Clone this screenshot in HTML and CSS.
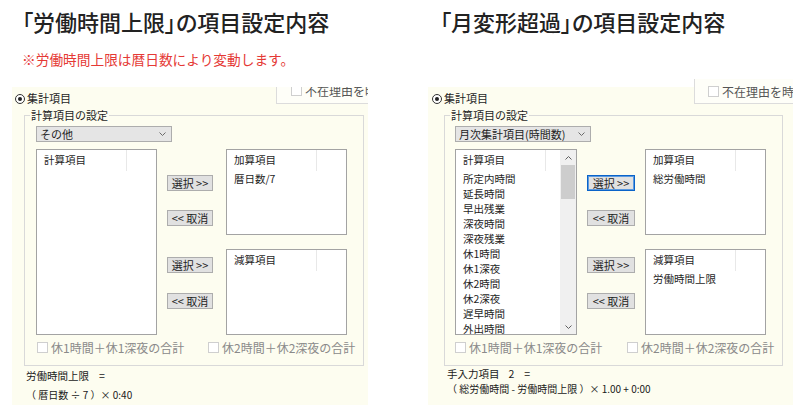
FILE: index.html
```html
<!DOCTYPE html>
<html lang="ja">
<head>
<meta charset="utf-8">
<title>項目設定内容</title>
<link rel="stylesheet" href="styles.css">
</head>
<body>
<div class="page">
  <section class="panel panel-a">
    <div class="head">
      <h1 class="title">「労働時間上限」の項目設定内容</h1>
      <p class="note">※労働時間上限は暦日数により変動します。</p>
    </div>
    <div class="win">
      <div class="topbox"><span class="cb"></span><span>不在理由を時</span></div>
      <div class="radio-row"><span class="radio"></span>集計項目</div>
      <div class="group">
        <span class="legend">計算項目の設定</span>
        <div class="select"><span>その他</span><svg class="chev" width="7" height="4" viewBox="0 0 7 4"><path d="M0.5 0.5 L3.5 3.5 L6.5 0.5" fill="none" stroke="#6a6a6a" stroke-width="1"/></svg></div>
        <div class="grid">
          <div class="list main">
            <div class="lbody">
              <div class="lhead">計算項目</div>
            </div>
          </div>
          <div class="btns">
            <div class="btn">選択 &gt;&gt;</div>
            <div class="btn b2">&lt;&lt; 取消</div>
            <div class="btn b3">選択 &gt;&gt;</div>
            <div class="btn b4">&lt;&lt; 取消</div>
          </div>
          <div class="rlists">
            <div class="list side">
              <div class="lhead">加算項目</div>
              <div class="item">暦日数/7</div>
            </div>
            <div class="list side">
              <div class="lhead">減算項目</div>
            </div>
          </div>
        </div>
        <div class="checks">
          <div class="check first"><span class="cb"></span><span>休1時間＋休1深夜の合計</span></div>
          <div class="check"><span class="cb"></span><span>休2時間＋休2深夜の合計</span></div>
        </div>
      </div>
      <div class="formula">
        <div class="f1">労働時間上限<span class="eq">=</span></div>
        <div class="f2">（ 暦日数 ÷ 7 ）× 0:40</div>
      </div>
    </div>
  </section>

  <section class="panel panel-b">
    <div class="head">
      <h1 class="title">「月変形超過」の項目設定内容</h1>
    </div>
    <div class="win">
      <div class="topbox"><span class="cb"></span><span>不在理由を時</span></div>
      <div class="radio-row"><span class="radio"></span>集計項目</div>
      <div class="group">
        <span class="legend">計算項目の設定</span>
        <div class="select"><span>月次集計項目(時間数)</span><svg class="chev" width="7" height="4" viewBox="0 0 7 4"><path d="M0.5 0.5 L3.5 3.5 L6.5 0.5" fill="none" stroke="#6a6a6a" stroke-width="1"/></svg></div>
        <div class="grid">
          <div class="list main scroll">
            <div class="lbody">
              <div class="lhead">計算項目</div>
              <div class="item">所定内時間</div>
              <div class="item">延長時間</div>
              <div class="item">早出残業</div>
              <div class="item">深夜時間</div>
              <div class="item">深夜残業</div>
              <div class="item">休1時間</div>
              <div class="item">休1深夜</div>
              <div class="item">休2時間</div>
              <div class="item">休2深夜</div>
              <div class="item">遅早時間</div>
              <div class="item">外出時間</div>
            </div>
            <div class="sbar">
              <div class="arrow"><svg width="7" height="4" viewBox="0 0 7 4"><path d="M0.5 3.5 L3.5 0.5 L6.5 3.5" fill="none" stroke="#606060" stroke-width="1"/></svg></div>
              <div class="thumb"></div>
              <div class="track"></div>
              <div class="arrow"><svg width="7" height="4" viewBox="0 0 7 4"><path d="M0.5 0.5 L3.5 3.5 L6.5 0.5" fill="none" stroke="#606060" stroke-width="1"/></svg></div>
            </div>
          </div>
          <div class="btns">
            <div class="btn focus">選択 &gt;&gt;</div>
            <div class="btn b2">&lt;&lt; 取消</div>
            <div class="btn b3">選択 &gt;&gt;</div>
            <div class="btn b4">&lt;&lt; 取消</div>
          </div>
          <div class="rlists">
            <div class="list side">
              <div class="lhead">加算項目</div>
              <div class="item">総労働時間</div>
            </div>
            <div class="list side">
              <div class="lhead">減算項目</div>
              <div class="item">労働時間上限</div>
            </div>
          </div>
        </div>
        <div class="checks">
          <div class="check first"><span class="cb"></span><span>休1時間＋休1深夜の合計</span></div>
          <div class="check"><span class="cb"></span><span>休2時間＋休2深夜の合計</span></div>
        </div>
      </div>
      <div class="formula">
        <div class="f1">手入力項目<span class="num">2</span><span class="eq">=</span></div>
        <div class="f2">（ 総労働時間 - 労働時間上限 ）× 1.00 + 0:00</div>
      </div>
    </div>
  </section>
</div>
</body>
</html>
```

FILE: styles.css
```css
* { box-sizing: border-box; }

body {
  margin: 0;
  background: #ffffff;
  font-family: "Noto Sans CJK JP", "Noto Sans", sans-serif;
  color: #1e1e1e;
}

.page {
  display: flex;
  width: 800px;
  height: 412px;
  overflow: hidden;
}

.panel {
  width: 400px;
  flex: none;
}

.head {
  height: 87px;
}

.title {
  margin: 0;
  padding-top: 6px;
  font-size: 22px;
  font-weight: 500;
  line-height: 30px;
  color: #222222;
  font-feature-settings: "palt";
  white-space: nowrap;
}

.panel-a .title { padding-left: 22px; }
.panel-b .title { padding-left: 40px; }

.note {
  margin: 15px 0 0 22px;
  font-size: 13.7px;
  line-height: 16px;
  color: #e53935;
  white-space: nowrap;
}

.win {
  position: relative;
  height: 318px;
  background: #fdfdf0;
}

.panel-a .win {
  margin-left: 12px;
  width: 356px;
  overflow: hidden;
}

.panel-b .win {
  margin-left: 28px;
  width: 365px;
}

/* top-right partly visible group box */
.topbox {
  position: absolute;
  top: -8px;
  right: 0;
  height: 25px;
  display: flex;
  align-items: center;
  gap: 3px;
  padding-left: 14px;
  border-left: 1px solid #dcdcdc;
  border-bottom: 1px solid #dcdcdc;
  background: #fefef8;
  font-size: 12px;
  color: #555555;
  white-space: nowrap;
  overflow: hidden;
}

.panel-a .topbox { width: 92px; top: -10px; height: 27px; }
.panel-b .topbox { width: 99px; padding-left: 13px; }

.radio-row {
  display: flex;
  align-items: center;
  gap: 2px;
  padding-top: 5px;
  height: 18px;
  font-size: 11px;
  line-height: 13px;
}

.panel-a .radio-row { padding-left: 3px; }
.panel-b .radio-row { padding-left: 4px; }

.radio {
  width: 10px;
  height: 10px;
  border: 1px solid #333333;
  border-radius: 50%;
  background: #ffffff;
  display: flex;
  align-items: center;
  justify-content: center;
}

.radio::after {
  content: "";
  width: 4px;
  height: 4px;
  border-radius: 50%;
  background: #222222;
}

.group {
  position: relative;
  margin-top: 10px;
  height: 251px;
  border: 1px solid #d9d9d9;
  padding: 10px 0 0 11px;
}

.panel-a .group { margin-left: 12px; width: 340px; }
.panel-b .group { margin-left: 16px; width: 339px; padding-left: 10px; }

.legend {
  position: absolute;
  top: -8px;
  left: 5px;
  padding: 0 1px;
  background: #fdfdf0;
  font-size: 11px;
  line-height: 14px;
  white-space: nowrap;
}

.select {
  width: 136px;
  height: 16px;
  border: 1px solid #adadad;
  background: #e5e5e5;
  display: flex;
  align-items: center;
  justify-content: space-between;
  padding: 0 5px 0 3px;
  font-size: 11px;
  line-height: 14px;
  white-space: nowrap;
}

.chev { flex: none; }

.grid {
  display: flex;
  align-items: flex-start;
  margin-top: 7px;
}

.list {
  background: #ffffff;
  border: 1px solid #a3a3a3;
  overflow: hidden;
}

.list.main {
  width: 121px;
  height: 186px;
  margin-right: 10px;
}

.list.scroll {
  width: 122px;
  display: flex;
}

.lbody {
  flex: 1;
  min-width: 0;
}

.lhead {
  width: 90px;
  height: 21px;
  border-right: 1px solid #e8e8e8;
  padding-left: 7px;
  font-size: 10.5px;
  line-height: 20px;
  white-space: nowrap;
}

.item {
  padding-left: 7px;
  font-size: 10.5px;
  line-height: 15px;
  white-space: nowrap;
}

.sbar {
  width: 16px;
  flex: none;
  display: flex;
  flex-direction: column;
  background: #f0f0f0;
}

.arrow {
  height: 15px;
  display: flex;
  align-items: center;
  justify-content: center;
  flex: none;
}

.thumb {
  height: 34px;
  margin: 0 1px;
  background: #cdcdcd;
  flex: none;
}

.track { flex: 1; }

.btns {
  width: 46px;
  margin-right: 13px;
  padding-top: 26px;
  display: flex;
  flex-direction: column;
}

.panel-b .btns {
  width: 48px;
  margin-right: 10px;
}

.btn {
  height: 16px;
  border: 1px solid #adadad;
  background: #e1e1e1;
  font-size: 11px;
  line-height: 14px;
  text-align: center;
  white-space: nowrap;
}

.btn.focus {
  border-color: #0a63c9;
  box-shadow: inset 0 0 0 1px #5c9ae0;
}

.btn.b2 { margin-top: 19px; }
.btn.b3 { margin-top: 31px; }
.btn.b4 { margin-top: 20px; }

.rlists {
  width: 121px;
  display: flex;
  flex-direction: column;
  gap: 14px;
}

.list.side {
  height: 86px;
}

.checks {
  display: flex;
  align-items: center;
  margin-top: 5px;
  height: 14px;
  font-size: 12px;
  color: #8a8a8a;
  white-space: nowrap;
}

.check {
  display: flex;
  align-items: center;
  gap: 3px;
}

.check.first { width: 172px; }
.panel-a .check.first { padding-left: 1px; }

.cb {
  width: 11px;
  height: 11px;
  flex: none;
  border: 1px solid #cfcfcf;
  background: #ffffff;
}

.formula {
  white-space: nowrap;
  color: #1a1a1a;
}

.panel-a .formula { padding-left: 14px; margin-top: 2px; }
.panel-b .formula { padding-left: 19px; margin-top: 0; }

.f1 {
  font-size: 10.5px;
  line-height: 16px;
}

.f2 {
  margin-top: 3px;
  font-size: 10px;
  line-height: 16px;
}

.panel-b .f1 { line-height: 15px; }
.panel-b .f2 { margin-top: 0; line-height: 15px; }

.eq { margin-left: 10px; }
.num { margin-left: 9px; }
```
